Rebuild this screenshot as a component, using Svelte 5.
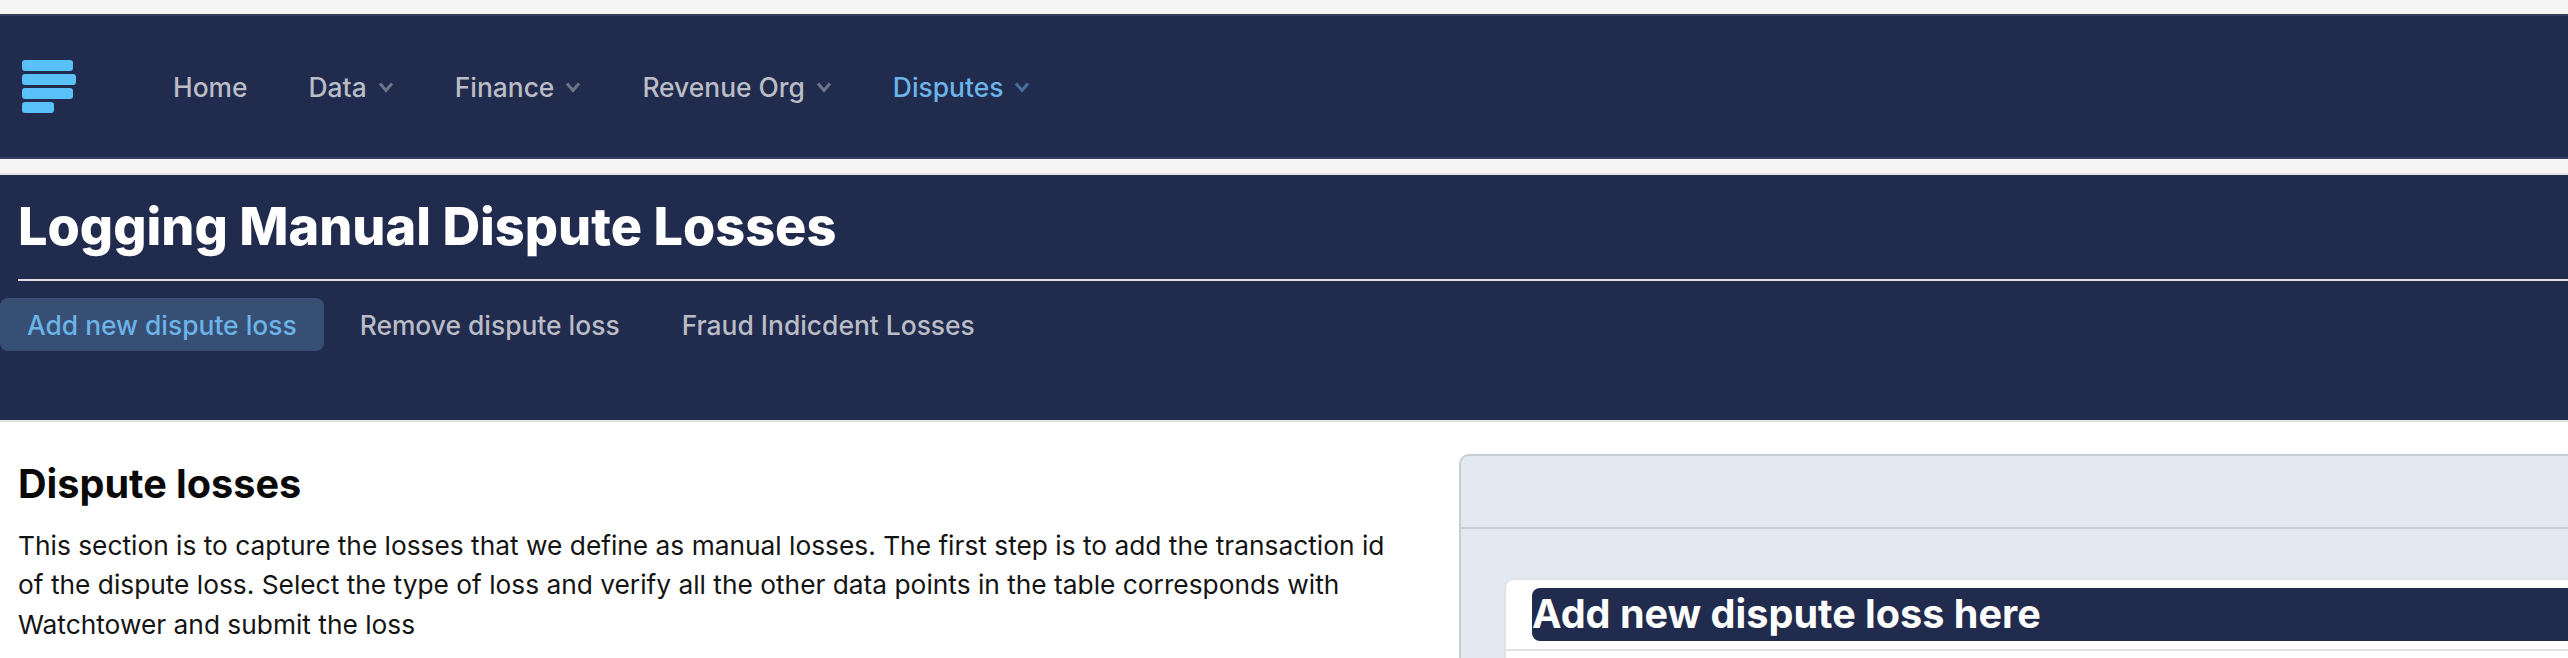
<script>
	const navItems = [
		{ label: 'Home' },
		{ label: 'Data', menu: true },
		{ label: 'Finance', menu: true },
		{ label: 'Revenue Org', menu: true },
		{ label: 'Disputes', menu: true, active: true }
	];
	const tabs = ['Add new dispute loss', 'Remove dispute loss', 'Fraud Indicdent Losses'];
</script>

<div class="page">
	<nav class="topbar">
		<svg class="logo" width="56" height="54" viewBox="0 0 56 54" aria-label="logo">
			<rect x="1" y="0" width="51" height="11" rx="3" />
			<rect x="1" y="14" width="54" height="11" rx="3" />
			<rect x="1" y="28" width="51" height="11" rx="3" />
			<rect x="1" y="42" width="32" height="11" rx="3" />
		</svg>
		<ul class="nav-items">
			{#each navItems as item}
				<li class:active={item.active}>
					{item.label}
					{#if item.menu}
						<svg class="chevron" width="16" height="12" viewBox="0 0 16 12">
							<path d="M2 2.5 L8 9.5 L14 2.5" />
						</svg>
					{/if}
				</li>
			{/each}
		</ul>
	</nav>

	<header class="title-block">
		<h1>Logging Manual Dispute Losses</h1>
		<div class="tabs">
			{#each tabs as tab, index}
				<button class:selected={index == 0}>{tab}</button>
			{/each}
		</div>
	</header>

	<main class="content">
		<section class="intro">
			<h2>Dispute losses</h2>
			<p>
				This section is to capture the losses that we define as manual losses. The first step is to add the transaction id of the dispute loss. Select the type of loss and verify all the other data points in the table corresponds with Watchtower and submit the loss
			</p>
		</section>
		<section class="panel">
			<div class="panel-head"></div>
			<div class="panel-body">
				<div class="card">
					<div class="card-head">
						<h3>Add new dispute loss here</h3>
					</div>
				</div>
			</div>
		</section>
	</main>
</div>

<style>
	:global(body) {
		background: #fff;
		font-family: Inter, "Liberation Sans", sans-serif;
		margin: 0;
		overflow: hidden;
	}

	.page {
		background: #fff;
		height: 658px;
		overflow: hidden;
		width: 2568px;
	}

	.topbar {
		align-items: center;
		background: #202b4d;
		border-bottom: 2px solid #363f5f;
		border-top: 2px solid #363f5f;
		box-shadow: 0 -14px 0 #f5f5f5, 0 16px 0 #f5f5f5;
		box-sizing: border-box;
		display: flex;
		height: 145px;
		margin-bottom: 14px;
		margin-top: 14px;
		padding-left: 21px;
	}

	.logo {
		fill: #5ac0f8;
		flex: none;
		margin-top: 1px;
	}

	.nav-items {
		color: #babcc6;
		display: flex;
		font-size: 26.4px;
		font-weight: 500;
		gap: 61px;
		list-style: none;
		margin: 0 0 0 96px;
		padding: 0;
	}

	.nav-items li {
		align-items: center;
		display: flex;
		gap: 11px;
	}

	.nav-items li.active {
		color: #6cb4e8;
	}

	.chevron {
		fill: none;
		opacity: 0.5;
		stroke: currentColor;
		stroke-width: 3;
	}

	.title-block {
		background: #202b4d;
		border-top: 2px solid #e4e4e4;
		box-sizing: border-box;
		height: 247px;
	}

	h1 {
		border-bottom: 2px solid #dcdde3;
		color: #fff;
		font-size: 52.2px;
		font-weight: 800;
		line-height: 62px;
		margin: 0 0 17px 18px;
		padding: 20px 0 22px;
	}

	.tabs {
		display: flex;
		gap: 10px;
	}

	.tabs button {
		background: transparent;
		border: none;
		border-radius: 8px;
		color: #babcc6;
		font-family: inherit;
		font-size: 26.4px;
		font-weight: 500;
		height: 53px;
		padding: 0 26px;
	}

	.tabs button.selected {
		background: #374f74;
		color: #6cb4e8;
		padding: 0 27px;
	}

	.content {
		border-top: 2px solid #e4e4e4;
		display: flex;
		padding-top: 32px;
	}

	.intro {
		box-sizing: border-box;
		flex: none;
		padding-left: 18px;
		width: 1459px;
	}

	h2 {
		color: #0a0a0a;
		font-size: 39.6px;
		font-weight: 700;
		line-height: 46px;
		margin: 7px 0 19px;
	}

	p {
		color: #141414;
		font-size: 26.3px;
		line-height: 39.4px;
		margin: 0;
		width: 1385px;
	}

	.panel {
		background: #e2e9f1;
		border: 2px solid #c6ced6;
		border-radius: 10px;
		flex: none;
		height: 400px;
		width: 1400px;
	}

	.panel-head {
		border-bottom: 2px solid #c6ced6;
		height: 71px;
	}

	.panel-body {
		padding: 49px 0 0 43px;
	}

	.card {
		background: #fff;
		border: 2px solid #e0e2e5;
		border-radius: 10px;
		height: 300px;
	}

	.card-head {
		border-bottom: 2px solid #e0e2e5;
		box-sizing: border-box;
		height: 71px;
		padding: 8px 0 0 26px;
	}

	h3 {
		background: #202b4d;
		border-radius: 8px;
		color: #fff;
		font-size: 39.6px;
		font-weight: 700;
		height: 53px;
		line-height: 53px;
		margin: 0;
	}
</style>
